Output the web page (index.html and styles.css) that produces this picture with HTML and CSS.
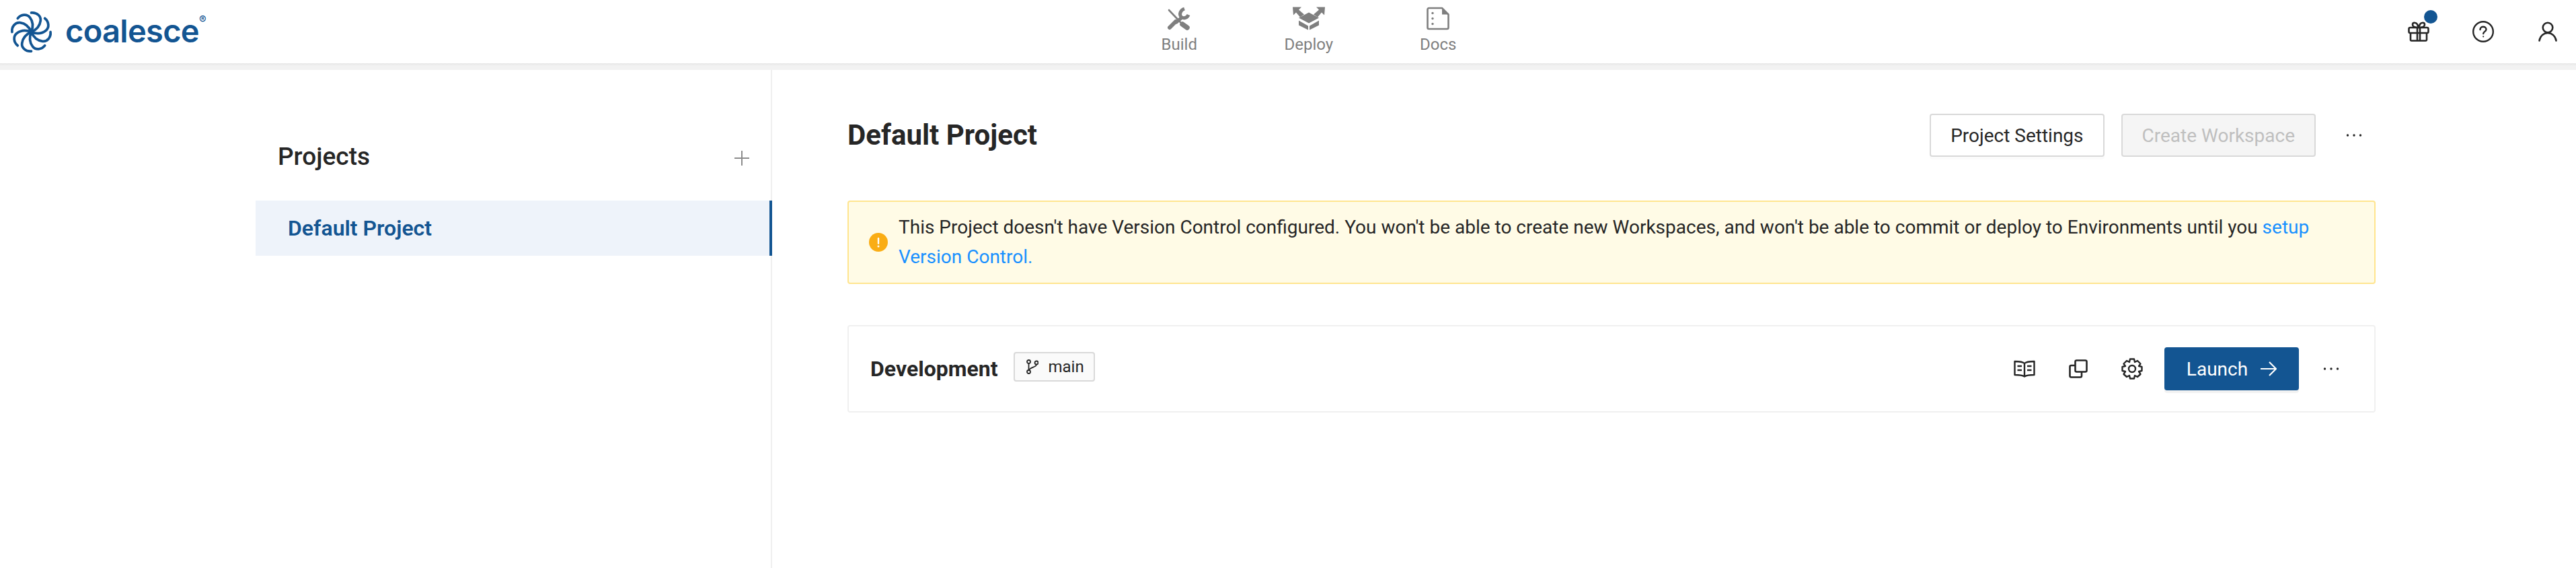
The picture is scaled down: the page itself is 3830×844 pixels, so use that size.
FILE: index.html
```html
<!DOCTYPE html>
<html lang="en">
<head>
<meta charset="utf-8">
<title>Coalesce - Projects</title>
<link rel="stylesheet" href="styles.css">
</head>
<body>
<svg class="defs" width="0" height="0" aria-hidden="true">
  <symbol id="dots" viewBox="0 0 24 6"><circle cx="2.5" cy="3" r="1.7"/><circle cx="12" cy="3" r="1.7"/><circle cx="21.5" cy="3" r="1.7"/></symbol>
</svg>
<header class="topbar">
  <div class="brand">
    <svg class="logo-mark" viewBox="-32 -32 64 64" fill="none" stroke="#135592" stroke-width="3.8" stroke-linecap="round">
      <g id="petal"><path d="M0 0C7-3 13-9 14-17C15-24 8-30 0-29"/></g>
      <use href="#petal" transform="rotate(45)"/><use href="#petal" transform="rotate(90)"/><use href="#petal" transform="rotate(135)"/><use href="#petal" transform="rotate(180)"/><use href="#petal" transform="rotate(225)"/><use href="#petal" transform="rotate(270)"/><use href="#petal" transform="rotate(315)"/>
    </svg>
    <span class="wordmark">coalesce<sup class="reg">®</sup></span>
  </div>
  <nav class="nav">
    <a class="nav-item">
      <svg class="nav-icon" width="34" height="35" viewBox="0 0 34 35" fill="none" stroke="#7f7f7f" stroke-linecap="round">
        <path d="M2 5L19 23" stroke-width="2.6"/><path d="M22 26L29 31" stroke-width="7.5"/><path d="M3 31L12 22" stroke-width="6"/><path d="M13 23L20 17" stroke-width="5"/><path d="M31 12C29 17 23 18 20 15C17 11 19 5 25 3" stroke-width="5" stroke-linecap="butt"/>
      </svg>
      <span>Build</span>
    </a>
    <a class="nav-item">
      <svg class="nav-icon" width="48" height="34" viewBox="0 0 48 34" fill="#7f7f7f">
        <path d="M24 8L39 16L24 24L9 16Z"/><path d="M9 20L23 28V34L9 27Z"/><path d="M39 20L25 28V34L39 27Z"/>
        <path d="M0 0H13L9 4L17 11L11 15L5 8L1 12Z"/><path d="M48 0H35L39 4L31 11L37 15L43 8L47 12Z"/>
      </svg>
      <span>Deploy</span>
    </a>
    <a class="nav-item">
      <svg class="nav-icon" width="34" height="34" viewBox="0 0 34 34" fill="none" stroke="#7f7f7f" stroke-width="2.6">
        <path d="M3.5 1.5H23L32.5 11V30.5a2 2 0 0 1-2 2H3.5a2 2 0 0 1-2-2V3.5a2 2 0 0 1 2-2Z" stroke-linejoin="round"/>
        <path d="M23 1.5L32.5 11H23Z" fill="#7f7f7f" stroke="none"/>
        <circle cx="9" cy="9" r="1.7" fill="#7f7f7f" stroke="none"/><circle cx="9" cy="17" r="1.7" fill="#7f7f7f" stroke="none"/><circle cx="9" cy="25" r="1.7" fill="#7f7f7f" stroke="none"/>
      </svg>
      <span>Docs</span>
    </a>
  </nav>
  <div class="tools">
    <span class="tool tool-gift">
      <svg width="32" height="30" viewBox="0 0 32 30" fill="none" stroke="#262626" stroke-width="2.6" stroke-linejoin="round">
        <rect x="1.5" y="9" width="29" height="8" rx="2"/><path d="M4 17V27a1.500 1.500 0 0 0 1.500 1.500H26.500A1.500 1.500 0 0 0 28 27V17"/><path d="M14 9V28.500M18 9V28.500"/><path d="M16 9C12 9 7 8 7 4.500C7 1 12 1 14 4ZM16 9C20 9 25 8 25 4.500C25 1 20 1 18 4Z"/>
      </svg>
      <span class="badge"></span>
    </span>
    <span class="tool">
      <svg width="32" height="32" viewBox="0 0 32 32" fill="none" stroke="#262626" stroke-width="2.4" stroke-linecap="round">
        <circle cx="16" cy="16" r="14.800"/><path d="M11.500 13C11.500 10.300 13.500 8.800 16 8.800C18.700 8.800 20.500 10.500 20.500 12.700C20.500 15.700 16.200 16 16.200 19"/><circle cx="16.200" cy="23.300" r="1.100" fill="#262626" stroke="none"/>
      </svg>
    </span>
    <span class="tool">
      <svg width="28" height="30" viewBox="0 0 28 30" fill="none" stroke="#262626" stroke-width="2.6" stroke-linecap="round">
        <circle cx="14" cy="9" r="7.300"/><path d="M1.500 28.500C2.500 21.500 8 17 14 17C20 17 25.500 21.500 26.500 28.500"/>
      </svg>
    </span>
  </div>
</header>
<main class="page">
  <aside class="sidebar">
    <div class="side-head">
      <h2 class="side-title">Projects</h2>
      <svg class="plus" width="22" height="22" viewBox="0 0 22 22" stroke="#8c8c8c" stroke-width="2"><path d="M0 11H22M11 0V22"/></svg>
    </div>
    <a class="side-row">Default Project</a>
  </aside>
  <section class="content">
    <div class="title-row">
      <h1 class="title">Default Project</h1>
      <button class="btn">Project Settings</button>
      <button class="btn btn-disabled">Create Workspace</button>
      <svg class="more more-title"><use href="#dots"/></svg>
    </div>
    <div class="alert">
      <svg class="alert-icon" width="28" height="28" viewBox="0 0 28 28"><circle cx="14" cy="14" r="14" fill="#faad14"/><rect x="12.800" y="7" width="2.400" height="10" rx="1.200" fill="#fff"/><circle cx="14" cy="20" r="1.500" fill="#fff"/></svg>
      <p class="alert-text">This Project doesn't have Version Control configured. You won't be able to create new Workspaces, and won't be able to commit or deploy to Environments until you <a class="link">setup</a> <a class="link">Version Control.</a></p>
    </div>
    <div class="card">
      <span class="env-name">Development</span>
      <span class="tag">
        <svg width="18" height="22" viewBox="0 0 18 22" fill="none" stroke="#262626" stroke-width="1.800"><circle cx="3.500" cy="3.500" r="2.500"/><circle cx="3.500" cy="18.500" r="2.500"/><circle cx="15" cy="5" r="2.500"/><path d="M3.500 6V16"/><path d="M15 7.500C15 12 6 11 4 16"/></svg>
        main
      </span>
      <div class="actions">
        <span class="icon-btn">
          <svg width="32" height="26" viewBox="0 0 32 26" fill="none" stroke="#262626" stroke-width="2.400" stroke-linejoin="round"><path d="M16 5C13 2 6 2 1.500 2V22C6 22 12 22 16 24.500C20 22 26 22 30.500 22V2C26 2 19 2 16 5ZM16 5V24"/><path d="M5.500 9H12M5.500 15H12M20 9H26.500M20 15H26.500"/></svg>
        </span>
        <span class="icon-btn">
          <svg width="28" height="28" viewBox="0 0 28 28" fill="none" stroke="#262626" stroke-width="2.600" stroke-linejoin="round"><rect x="9.500" y="1.500" width="17" height="17" rx="2"/><path d="M9 9H3.500a2 2 0 0 0-2 2V24.500a2 2 0 0 0 2 2H17a2 2 0 0 0 2-2V19"/></svg>
        </span>
        <span class="icon-btn">
          <svg width="32" height="32" viewBox="0 0 32 32" fill="none" stroke="#262626" stroke-width="2.400" stroke-linejoin="round"><circle cx="16" cy="16" r="5"/><path d="M13 1.500H19L20 6L24 4L28.500 8.500L26 12L30.500 13V19L26 20L28.500 24L24 28L20 26L19 30.500H13L12 26L8 28L3.500 24L6 20L1.500 19V13L6 12L3.500 8.500L8 4L12 6Z"/></svg>
        </span>
        <button class="btn-primary">Launch
          <svg width="24" height="22" viewBox="0 0 24 22" fill="none" stroke="#fff" stroke-width="2.200"><path d="M0 11H23M13 1L23 11L13 21"/></svg>
        </button>
        <svg class="more more-card"><use href="#dots"/></svg>
      </div>
    </div>
  </section>
</main>
</body>
</html>
```
FILE: styles.css
```css
* { box-sizing: border-box; }
html, body { margin: 0; padding: 0; }
body {
  width: 3830px;
  height: 844px;
  overflow: hidden;
  background: #fff;
  font-family: Roboto, "Liberation Sans", sans-serif;
  color: #262626;
}
.defs { display: block; height: 0; }
h1, h2, p { margin: 0; }

/* top bar */
.topbar {
  height: 104px;
  border-bottom: 10px solid #f2f2f2;
  display: flex;
  align-items: stretch;
  background: #fff;
  position: relative;
}
.topbar::after {
  content: "";
  position: absolute;
  left: 0; right: 0; top: 94px; height: 4px;
  background: linear-gradient(#e6e6e6, #f2f2f2);
}
.brand {
  width: 1657px;
  display: flex;
  align-items: center;
  padding-left: 15px;
}
.logo-mark { width: 63px; height: 63px; flex: none; }
.wordmark {
  margin-left: 19px;
  margin-top: -3px;
  font-family: Inter, sans-serif;
  font-size: 47px;
  font-weight: 600;
  letter-spacing: -.7px;
  color: #135592;
  line-height: 1;
  position: relative;
}
.reg {
  position: absolute;
  top: -1px;
  left: 100%;
  font-size: 16px;
  letter-spacing: 0;
  font-weight: 500;
  line-height: 1;
}
.nav { display: flex; }
.nav-item {
  width: 192.500px;
  padding-top: 10px;
  display: flex;
  flex-direction: column;
  align-items: center;
  color: #7f7f7f;
  font-size: 24px;
  line-height: 28px;
}
.nav-icon { display: block; height: 35px; margin-bottom: 7px; }
.tools {
  margin-left: auto;
  padding-right: 22px;
  display: flex;
  align-items: center;
  gap: 56px;
}
.tool {
  width: 40px;
  height: 36px;
  display: flex;
  align-items: center;
  justify-content: center;
  position: relative;
}
.tool svg { display: block; }
.badge {
  position: absolute;
  width: 20px;
  height: 20px;
  border-radius: 50%;
  background: #135592;
  top: -14px;
  right: -8px;
}

/* page */
.page { display: flex; height: 740px; }
.sidebar {
  width: 1148px;
  flex: none;
  padding: 103px 0 0 380px;
  border-right: 2px solid #f0f0f0;
}
.side-head {
  height: 56px;
  padding: 0 32px 0 33px;
  margin-bottom: 35px;
  display: flex;
  align-items: center;
  justify-content: space-between;
}
.side-title { font-size: 37px; font-weight: 500; line-height: 48px; margin-top: -4px; color: #262626; }
.plus { display: block; }
.side-row {
  display: flex;
  align-items: center;
  height: 82px;
  margin-right: -2px;
  padding-left: 48px;
  background: #eef3fa;
  border-right: 4px solid #135592;
  color: #135592;
  font-size: 32px;
  font-weight: 600;
}

.content { flex: 1; padding: 65px 298px 0 112px; }
.title-row { display: flex; align-items: center; height: 64px; margin-bottom: 65px; }
.title { font-size: 42px; font-weight: 700; line-height: 56px; margin-right: auto; color: #262626; }
.btn {
  height: 64px;
  padding: 0 29px;
  background: #fff;
  border: 2px solid #d9d9d9;
  border-radius: 4px;
  box-shadow: 0 4px 0 rgba(0, 0, 0, .015);
  font: 400 28px Roboto, sans-serif;
  color: #262626;
}
.btn-disabled {
  margin-left: 25px;
  background: #f5f5f5;
  color: #bfbfbf;
  box-shadow: none;
}
.more { width: 24px; height: 6px; fill: #262626; display: block; flex: none; }
.more-title { margin-left: 45px; margin-right: 20px; }
.more-card { margin-left: 36px; }

.alert {
  display: flex;
  align-items: center;
  gap: 16px;
  height: 124px;
  padding: 0 30px 0 30px;
  background: #fffbe6;
  border: 2px solid #ffe58f;
  border-radius: 4px;
  margin-bottom: 61px;
}
.alert-icon { flex: none; display: block; }
.alert-text { font-size: 28px; line-height: 44px; color: #262626; }
.link { color: #1890ff; }

.card {
  display: flex;
  align-items: center;
  height: 130px;
  padding: 0 52px 0 32px;
  border: 2px solid #f0f0f0;
  border-radius: 4px;
}
.env-name { font-size: 32px; font-weight: 700; color: #262626; }
.tag {
  margin-left: 24px;
  margin-top: -6px;
  height: 44px;
  padding: 0 14px 0 17px;
  display: flex;
  align-items: center;
  gap: 14px;
  background: #fafafa;
  border: 2px solid #d9d9d9;
  border-radius: 4px;
  font-size: 24px;
  color: #262626;
}
.actions { margin-left: auto; display: flex; align-items: center; }
.icon-btn {
  width: 40px;
  height: 40px;
  margin-right: 40px;
  display: flex;
  align-items: center;
  justify-content: center;
}
.icon-btn:nth-child(3) { margin-right: 28px; }
.icon-btn svg { display: block; flex: none; }
.btn-primary {
  width: 200px;
  height: 64px;
  display: flex;
  align-items: center;
  justify-content: center;
  gap: 19px;
  background: #135592;
  border: 0;
  border-radius: 4px;
  box-shadow: 0 4px 0 rgba(0, 0, 0, .05);
  color: #fff;
  font: 400 28px Roboto, sans-serif;
}
```
